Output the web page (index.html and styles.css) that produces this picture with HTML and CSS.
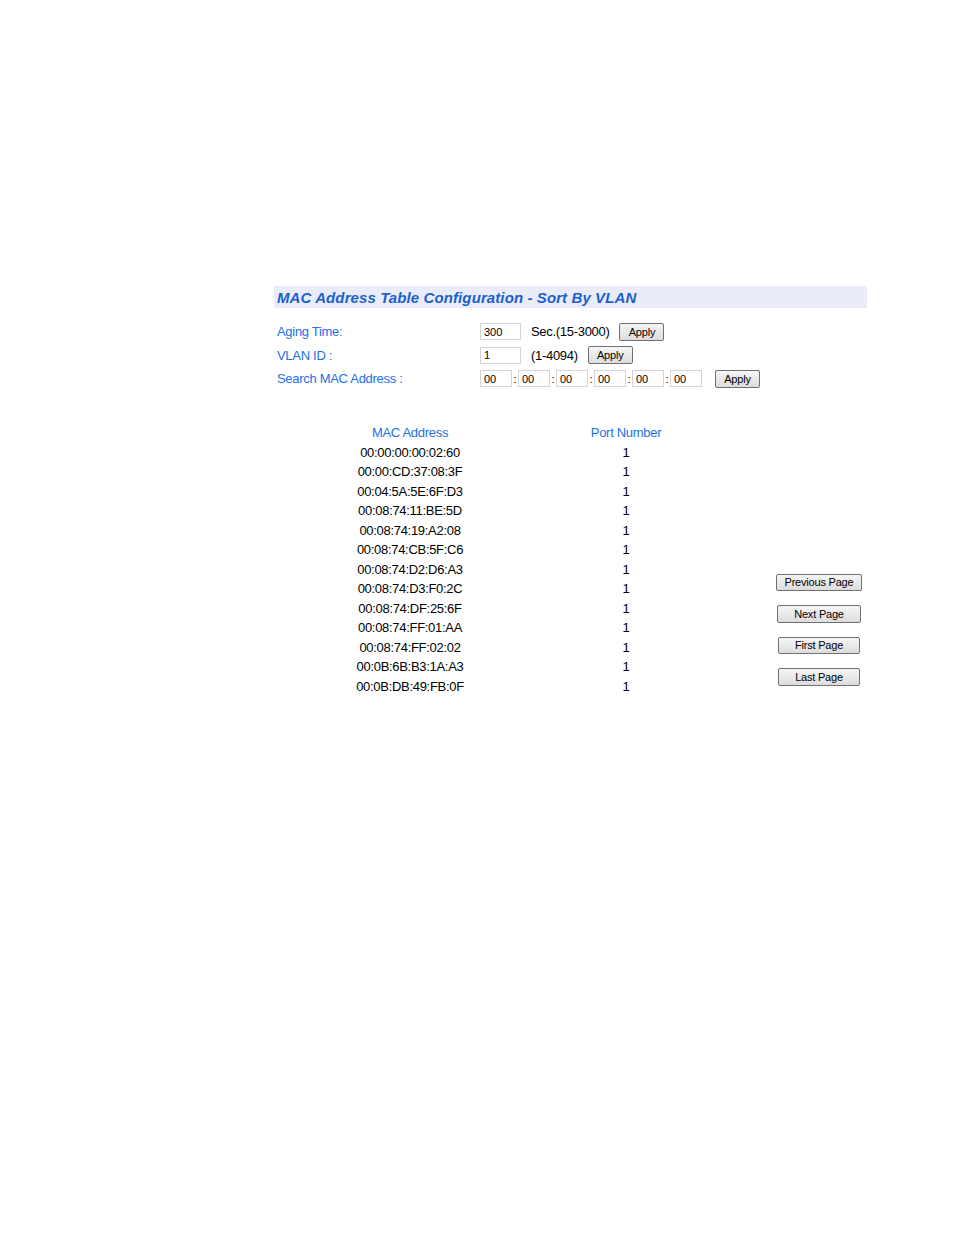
FILE: index.html
```html
<!DOCTYPE html>
<html lang="en">
<head>
    <meta charset="UTF-8">
    <title>MAC Address Table Configuration</title>
    <link rel="stylesheet" href="styles.css">
</head>
<body>
    <div class="page">
        <div class="title-bar">
            <h1>MAC Address Table Configuration - Sort By VLAN</h1>
        </div>

        <div class="settings">
            <div class="setting">
                <span class="label">Aging Time:</span>
                <div class="fields">
                    <input class="box" type="text" value="300">
                    <span class="hint">Sec.(15-3000)</span>
                    <button class="btn apply">Apply</button>
                </div>
            </div>
            <div class="setting">
                <span class="label">VLAN ID :</span>
                <div class="fields">
                    <input class="box" type="text" value="1">
                    <span class="hint">(1-4094)</span>
                    <button class="btn apply">Apply</button>
                </div>
            </div>
            <div class="setting">
                <span class="label">Search MAC Address :</span>
                <div class="fields mac">
                    <input class="box small" type="text" value="00"><span class="colon">:</span>
                    <input class="box small" type="text" value="00"><span class="colon">:</span>
                    <input class="box small" type="text" value="00"><span class="colon">:</span>
                    <input class="box small" type="text" value="00"><span class="colon">:</span>
                    <input class="box small" type="text" value="00"><span class="colon">:</span>
                    <input class="box small" type="text" value="00">
                    <button class="btn apply search-apply">Apply</button>
                </div>
            </div>
        </div>

        <div class="listing">
            <table class="mac-table">
                <thead>
                    <tr><th class="col-mac">MAC Address</th><th class="col-port">Port Number</th></tr>
                </thead>
                <tbody id="macRows"></tbody>
            </table>
            <div class="pager">
                <button class="btn page-btn prev">Previous Page</button>
                <button class="btn page-btn">Next Page</button>
                <button class="btn page-btn short">First Page</button>
                <button class="btn page-btn short">Last Page</button>
            </div>
        </div>
    </div>

    <script>
        const entries = [
            "00:00:00:00:02:60",
            "00:00:CD:37:08:3F",
            "00:04:5A:5E:6F:D3",
            "00:08:74:11:BE:5D",
            "00:08:74:19:A2:08",
            "00:08:74:CB:5F:C6",
            "00:08:74:D2:D6:A3",
            "00:08:74:D3:F0:2C",
            "00:08:74:DF:25:6F",
            "00:08:74:FF:01:AA",
            "00:08:74:FF:02:02",
            "00:0B:6B:B3:1A:A3",
            "00:0B:DB:49:FB:0F"
        ];

        const rows = document.getElementById("macRows");
        entries.forEach(mac => {
            const tr = document.createElement("tr");
            tr.innerHTML = `<td>${mac}</td><td>1</td>`;
            rows.appendChild(tr);
        });
    </script>
</body>
</html>
```

FILE: styles.css
```css
body {
    margin: 0;
    padding: 0;
    background-color: #fff;
    font-family: "Liberation Sans", Arial, sans-serif;
    font-size: 13px;
    color: #000;
}

.page {
    width: 593px;
    padding-top: 286px;
    padding-left: 274px;
}

.title-bar {
    height: 22px;
    background-color: #eaedf9;
    display: flex;
    align-items: center;
    padding-left: 3px;
}

.title-bar h1 {
    margin: 0;
    font-size: 15px;
    font-weight: bold;
    font-style: italic;
    color: #1b5fd0;
    letter-spacing: 0.1px;
}

.settings {
    padding-top: 12px;
    padding-left: 3px;
}

.setting {
    display: flex;
    align-items: center;
    height: 23.5px;
}

.setting .label {
    width: 203px;
    color: #2370e6;
    letter-spacing: -0.3px;
}

.fields {
    display: flex;
    align-items: center;
}

.box {
    width: 41px;
    height: 17px;
    box-sizing: border-box;
    border: 1px solid #d4d4d4;
    padding: 0 3px;
    font-family: "Liberation Sans", Arial, sans-serif;
    font-size: 11px;
    color: #000;
    margin: 0;
}

.box.small {
    width: 32px;
}

.colon {
    width: 6px;
    text-align: center;
    font-size: 11px;
}

.hint {
    margin-left: 10px;
    margin-right: 10px;
    letter-spacing: -0.3px;
}

.btn {
    font-family: "Liberation Sans", Arial, sans-serif;
    font-size: 11px;
    color: #000;
    background: linear-gradient(#f6f6f6, #dcdcdc);
    border: 1px solid #707070;
    border-radius: 2px;
    height: 18px;
    padding: 0;
    margin: 0;
    letter-spacing: -0.2px;
}

.btn.apply {
    width: 45px;
}

.search-apply {
    margin-left: 13px;
}

.listing {
    display: flex;
    padding-top: 32px;
}

.mac-table {
    border-collapse: collapse;
    margin-left: 26px;
    flex-shrink: 0;
}

.mac-table th {
    font-weight: normal;
    color: #2370e6;
    line-height: 20px;
    height: 20px;
    padding: 0;
    letter-spacing: -0.3px;
}

.mac-table td {
    text-align: center;
    line-height: 19.5px;
    height: 19.5px;
    padding: 0;
    letter-spacing: -0.3px;
}

.col-mac {
    width: 220px;
}

.col-port {
    width: 212px;
}

.pager {
    margin-left: 39px;
    padding-top: 151px;
    display: flex;
    flex-direction: column;
    align-items: center;
    gap: 14px;
    width: 96px;
    flex-shrink: 0;
}

.page-btn {
    width: 84px;
    height: 17.5px;
}

.page-btn.prev {
    width: 86px;
}

.page-btn.short {
    width: 82px;
}
```
